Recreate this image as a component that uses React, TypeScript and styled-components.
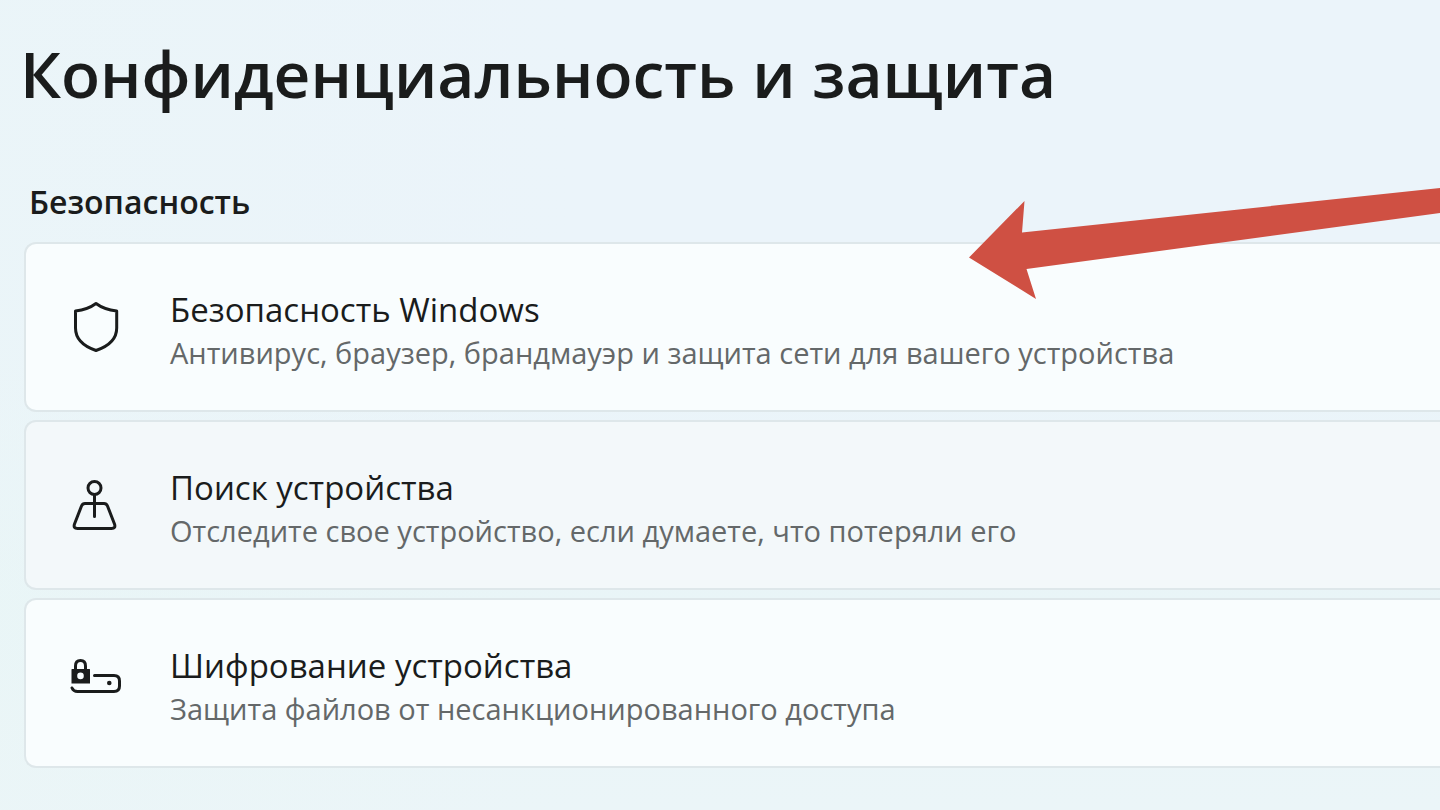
import React from "react";
import styled, { createGlobalStyle } from "styled-components";

const GlobalStyle = createGlobalStyle`
  body {
    margin: 0;
    background: #ebf4fa;
    color: #1a1c1c;
    font-family: "Open Sans", "Noto Sans", sans-serif;
  }
`;

const Page = styled.main`
  position: relative;
  box-sizing: border-box;
  min-height: 100vh;
  padding: 28px 0 40px 24px;
  overflow: hidden;
  background:
    linear-gradient(90deg, rgba(234, 246, 246, 0.4), rgba(234, 246, 246, 0) 40%),
    linear-gradient(180deg, #ebf4fa 0%, #ebf4fa 45%, #e9f5f7 75%, #ebf5f8 100%);
`;

const PageTitle = styled.h1`
  margin: 0 0 0 -4px;
  font-size: 64px;
  font-weight: 600;
  line-height: 92px;
  white-space: nowrap;
`;

const Section = styled.section`
  margin-top: 60px;
`;

const SectionTitle = styled.h2`
  margin: 0 0 18px 5px;
  font-size: 32px;
  font-weight: 600;
  line-height: 44px;
`;

const CardList = styled.div`
  display: flex;
  flex-direction: column;
  gap: 8px;
`;

const Card = styled.button<{ $muted?: boolean }>`
  display: flex;
  align-items: center;
  box-sizing: border-box;
  width: 100%;
  min-height: 170px;
  padding: 0 0 0 42px;
  gap: 44px;
  border: 2px solid #dee7ea;
  border-right: 0;
  border-radius: 12px 0 0 12px;
  background: ${(p) => (p.$muted ? "#f3f8fa" : "#f9fdfe")};
  color: inherit;
  font-family: inherit;
  text-align: left;
`;

const CardIcon = styled.svg`
  flex: none;
  width: 58px;
  height: 58px;
  fill: none;
  stroke: currentColor;
  stroke-width: 3;
  stroke-linecap: round;
  stroke-linejoin: round;
`;

const CardText = styled.span`
  display: flex;
  flex-direction: column;
  padding-top: 8px;
  white-space: nowrap;
`;

const CardTitle = styled.span`
  font-size: 33px;
  line-height: 44px;
`;

const CardHint = styled.span`
  color: #646869;
  font-size: 29px;
  line-height: 42px;
`;

const Arrow = styled.svg`
  position: absolute;
  top: 188px;
  right: 0;
  width: 472px;
  height: 112px;
  fill: #cf5043;
  pointer-events: none;
`;

const ShieldIcon = () => (
  <CardIcon viewBox="0 0 58 58" aria-hidden="true">
    <path d="M28 5.500Q36 11.500 48.700 13V30Q48.700 45.500 28 52.500Q7.500 45.500 7.500 30V13Q20 11.500 28 5.500Z" />
  </CardIcon>
);

const LocatorIcon = () => (
  <CardIcon viewBox="0 0 58 58" aria-hidden="true">
    <circle cx="26.500" cy="12" r="6.500" />
    <path d="M26.500 19V40.500M17 27.500H36Q38.500 27.500 39.500 30L46.500 48Q48 52.500 43.500 52.500H9.500Q5 52.500 6.500 48L13.500 30Q14.500 27.500 17 27.500Z" />
  </CardIcon>
);

const EncryptionIcon = () => (
  <CardIcon viewBox="0 0 58 58" aria-hidden="true">
    <path d="M7.500 16V12Q7.500 6.500 12.500 6.500Q17.500 6.500 17.500 12V16" />
    <path
      d="M4 15H21.500Q22 15 22 15.500V29.500H3.500V15.500Q3.500 15 4 15ZM12.500 18.600A3.300 3.300 0 1 0 12.500 25.200A3.300 3.300 0 1 0 12.500 18.600Z"
      fill="currentColor"
      fillRule="evenodd"
      stroke="none"
    />
    <path d="M26.500 21.500H46Q51.500 21.500 51.500 27V32Q51.500 37.500 46 37.500H9.500Q5.500 37.500 4 34" />
    <circle cx="41.300" cy="29" r="2.300" fill="currentColor" stroke="none" />
  </CardIcon>
);

const items = [
  {
    title: "Безопасность Windows",
    hint: "Антивирус, браузер, брандмауэр и защита сети для вашего устройства",
    Icon: ShieldIcon,
  },
  {
    title: "Поиск устройства",
    hint: "Отследите свое устройство, если думаете, что потеряли его",
    Icon: LocatorIcon,
    muted: true,
  },
  {
    title: "Шифрование устройства",
    hint: "Защита файлов от несанкционированного доступа",
    Icon: EncryptionIcon,
  },
];

export default function App() {
  return (
    <>
      <GlobalStyle />
      <Page>
        <PageTitle>Конфиденциальность и защита</PageTitle>
        <Section aria-labelledby="security">
          <SectionTitle id="security">Безопасность</SectionTitle>
          <CardList>
            {items.map(({ title, hint, Icon, muted }) => (
              <Card key={title} type="button" $muted={muted}>
                <Icon />
                <CardText>
                  <CardTitle>{title}</CardTitle>
                  <CardHint>{hint}</CardHint>
                </CardText>
              </Card>
            ))}
          </CardList>
        </Section>
        <Arrow viewBox="0 0 472 112" aria-hidden="true">
          <path d="M1 69.500L56.500 13L54 44.500L472 0V25L58.500 81L68 111Z" />
        </Arrow>
      </Page>
    </>
  );
}
